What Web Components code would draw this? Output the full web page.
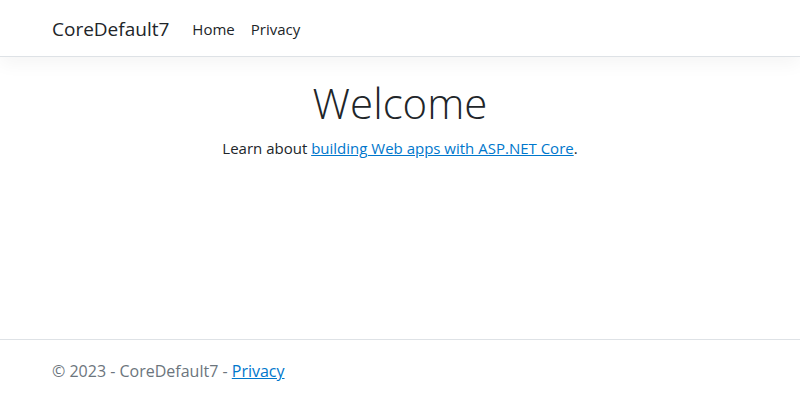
<!DOCTYPE html>
<html lang="en">
<head>
<meta charset="utf-8">
<title>Home page - CoreDefault7</title>
<style>
html { height: 100%; }
body { margin: 0; min-height: 100%; display: flex; flex-direction: column; background: #fff; color: #212529; font: 16px/24px "Open Sans", "Noto Sans", sans-serif; }
page-footer { margin-top: auto; }
</style>
</head>
<body>
<site-header brand="CoreDefault7"><nav-link href="#home">Home</nav-link><nav-link href="#privacy">Privacy</nav-link></site-header>
<welcome-hero heading="Welcome">Learn about <text-link href="#docs">building Web apps with ASP.NET Core</text-link>.</welcome-hero>
<page-footer>© 2023 - CoreDefault7 - <text-link href="#privacy">Privacy</text-link></page-footer>
<script>
class BaseElement extends HTMLElement {
  connectedCallback() {
    if (this.shadowRoot) return;
    this.attachShadow({ mode: "open" }).innerHTML = this.constructor.markup;
    this.fill(this.shadowRoot);
  }
  fill() {}
}
class SiteHeader extends BaseElement {
  static markup = `<style>
    :host { display: block; border-bottom: 1px solid #dee2e6; box-shadow: 0 8px 16px rgba(0,0,0,.04); }
    header { display: flex; align-items: center; gap: 15px; max-width: 696px; margin: 0 auto; padding: 9px 12px 7px; }
    .brand { color: #212529; text-decoration: none; font-size: 19px; line-height: 30px; padding: 5px 0; }
    nav { display: flex; }
  </style><header><a class="brand" href="#home"></a><nav><slot></slot></nav></header>`;
  fill(root) { root.querySelector("a").textContent = this.getAttribute("brand"); }
}
class NavLink extends BaseElement {
  static markup = `<style>
    :host { display: block; font-size: 15px; }
    a { display: block; padding: 8px; color: #212529; text-decoration: none; }
  </style><a><slot></slot></a>`;
  fill(root) { root.querySelector("a").href = this.getAttribute("href"); }
}
class TextLink extends BaseElement {
  static markup = `<style>
    :host { display: inline; }
    a { color: #0077cc; text-decoration: underline; }
  </style><a><slot></slot></a>`;
  fill(root) { root.querySelector("a").href = this.getAttribute("href"); }
}
class WelcomeHero extends BaseElement {
  static markup = `<style>
    :host { display: block; padding: 16px 12px; text-align: center; }
    h1 { margin: 0 0 4px; font-size: 42px; font-weight: 300; line-height: 60px; }
    p { margin: 0; font-size: 15px; line-height: 22px; }
  </style><main><h1></h1><p><slot></slot></p></main>`;
  fill(root) { root.querySelector("h1").textContent = this.getAttribute("heading"); }
}
class PageFooter extends BaseElement {
  static markup = `<style>
    :host { display: block; border-top: 1px solid #dee2e6; color: #6c757d; }
    footer { max-width: 696px; margin: 0 auto; padding: 19px 12px 17px; }
  </style><footer><slot></slot></footer>`;
}
customElements.define("site-header", SiteHeader);
customElements.define("nav-link", NavLink);
customElements.define("text-link", TextLink);
customElements.define("welcome-hero", WelcomeHero);
customElements.define("page-footer", PageFooter);
</script>
</body>
</html>
